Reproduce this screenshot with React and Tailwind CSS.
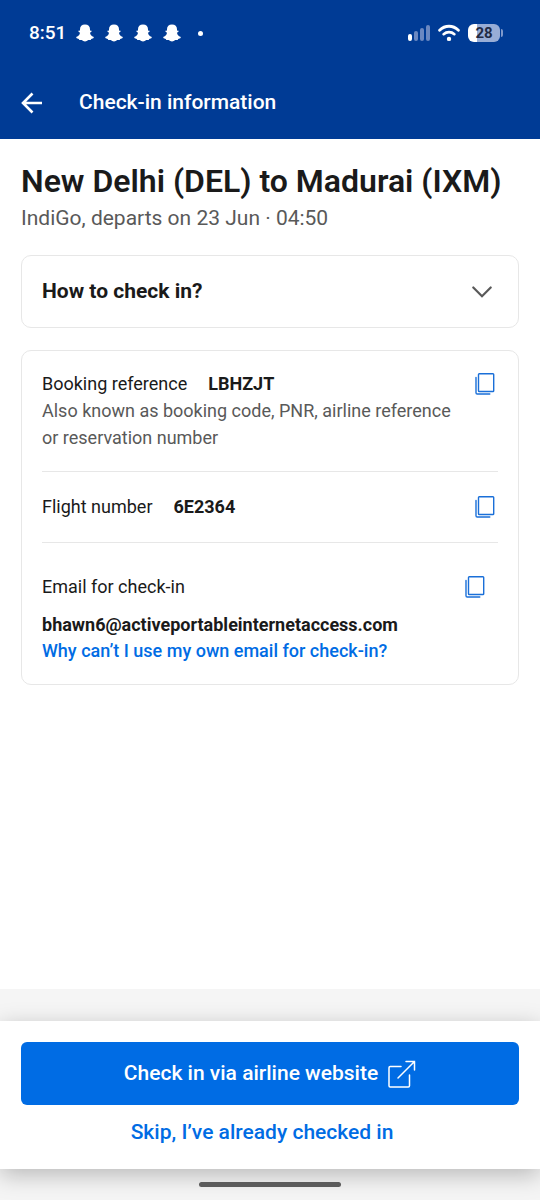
import React from "react";

const BOOKING = {
  title: "New Delhi (DEL) to Madurai (IXM)",
  subtitle: "IndiGo, departs on 23 Jun · 04:50",
  reference: "LBHZJT",
  flight: "6E2364",
  email: "bhawn6@activeportableinternetaccess.com",
};

function GhostIcon() {
  return (
    <svg className="w-[18px] h-[18px]" viewBox="0 0 18 18" fill="white">
      <path d="M9 .5C12.200 .5 14 2.500 14 5.200V6.800L15 6.600Q15.900 6.900 15.400 7.800L14 8.700C14.300 10.900 15.600 12.100 17.400 12.800Q18.200 13.500 17.300 14.200L15.200 15L14.700 16.100L12.300 16C11.200 16.700 10.300 17.500 9 17.500S6.800 16.700 5.700 16L3.300 16.100L2.800 15L.7 14.200Q-.2 13.500 .6 12.800C2.400 12.100 3.700 10.900 4 8.700L2.600 7.800Q2.100 6.900 3 6.600L4 6.800V5.200C4 2.500 5.800 .5 9 .5Z" />
    </svg>
  );
}

function WifiIcon() {
  return (
    <svg className="w-[22px] h-[18px]" viewBox="0 0 22 18" fill="none">
      <path
        d="M1.6 6.2C7 .9 15 .9 20.4 6.2"
        stroke="white"
        strokeWidth="2.8"
        strokeLinecap="round"
      />
      <path
        d="M5.6 10.2C8.7 7.4 13.3 7.4 16.4 10.2"
        stroke="white"
        strokeWidth="2.6"
        strokeLinecap="round"
      />
      <circle cx="11" cy="14.9" r="2.2" fill="white" />
    </svg>
  );
}

function BatteryIcon() {
  return (
    <div className="flex items-center gap-px">
      <div className="flex items-center justify-center w-8 h-[18px] rounded-md bg-linear-to-r from-white from-28% to-[#98add6] to-28% text-[#1f2a44] text-[15px] leading-none font-bold">
        28
      </div>
      <div className="w-[2px] h-2 rounded-r-full bg-[#7f99cb]" />
    </div>
  );
}

function StatusBar() {
  return (
    <div className="flex items-center justify-between h-[66px] pl-[29px] pr-[37px]">
      <div className="flex items-center">
        <span className="w-[47px] text-[19px] font-medium">8:51</span>
        <div className="flex items-center gap-[11px]">
          {[0, 1, 2, 3].map((item) => (
            <GhostIcon key={item} />
          ))}
        </div>
        <span className="w-[5px] h-[5px] ml-[17px] rounded-full bg-white" />
      </div>
      <div className="flex items-center gap-2">
        <div className="flex items-end gap-[2px]">
          <span className="w-1 h-[7px] rounded-full bg-white" />
          <span className="w-1 h-[10px] rounded-full bg-[#6b88c1]" />
          <span className="w-1 h-[13px] rounded-full bg-[#6b88c1]" />
          <span className="w-1 h-4 rounded-full bg-[#6b88c1]" />
        </div>
        <WifiIcon />
        <BatteryIcon />
      </div>
    </div>
  );
}

function CopyButton({ label, className = "" }) {
  return (
    <button
      type="button"
      aria-label={label}
      className={`shrink-0 h-[26px] text-[#1a6fd8] ${className}`}
    >
      <svg className="w-5 h-[22px]" viewBox="0 0 20 22" fill="none">
        <rect
          x="3.5"
          y="0.7"
          width="15.2"
          height="17.8"
          rx="0.8"
          stroke="currentColor"
          strokeWidth="1.4"
        />
        <path
          d="M1 4.5V19.8Q1 21 2.2 21H14.8"
          stroke="currentColor"
          strokeWidth="1.4"
          strokeLinecap="round"
        />
      </svg>
    </button>
  );
}

export default function App() {
  const [open, setOpen] = React.useState(false);

  return (
    <div className="min-h-screen flex flex-col bg-white font-[Roboto,sans-serif] text-[#1a1a1a]">
      <header className="bg-[#003b95] text-white">
        <StatusBar />
        <div className="flex items-center h-[73px] px-[21px]">
          <button type="button" aria-label="Back" className="w-[58px]">
            <svg className="w-[22px] h-[22px]" viewBox="0 0 22 22" fill="none">
              <path
                d="M21 11H2M11.5 1.5L2 11L11.5 20.5"
                stroke="currentColor"
                strokeWidth="2.6"
              />
            </svg>
          </button>
          <h1 className="text-[21px] font-medium">Check-in information</h1>
        </div>
      </header>

      <main className="flex-1 px-[21px] pt-[23px]">
        <h2 className="text-[32px] leading-[38px] font-semibold">
          {BOOKING.title}
        </h2>
        <p className="mt-1 text-[21px] leading-7 text-[#595959]">
          {BOOKING.subtitle}
        </p>

        <button
          type="button"
          aria-expanded={open}
          onClick={() => setOpen(!open)}
          className="flex items-center justify-between w-full h-[73px] mt-[23px] pl-5 pr-[26px] border border-[#e7e7e7] rounded-[10px] text-[21px] font-bold"
        >
          <span>How to check in?</span>
          <svg className="w-5 h-3" viewBox="0 0 20 12" fill="none">
            <path
              d="M1.3 1.5L10 10.2L18.7 1.5"
              stroke="#595959"
              strokeWidth="2.2"
              strokeLinecap="round"
            />
          </svg>
        </button>

        <section className="mt-[22px] p-5 border border-[#e7e7e7] rounded-[10px] text-[18px] leading-[26px]">
          <div className="flex items-start justify-between gap-5 pb-5 border-b border-[#e7e7e7]">
            <div>
              <div className="flex gap-[21px]">
                <span>Booking reference</span>
                <span className="font-bold">{BOOKING.reference}</span>
              </div>
              <p className="leading-[27px] text-[#595959]">
                Also known as booking code, PNR, airline reference or
                reservation number
              </p>
            </div>
            <CopyButton label="Copy booking reference" className="mr-[3px]" />
          </div>
          <div className="flex items-start justify-between py-[22px] border-b border-[#e7e7e7]">
            <div className="flex gap-[21px]">
              <span>Flight number</span>
              <span className="font-bold">{BOOKING.flight}</span>
            </div>
            <CopyButton label="Copy flight number" className="mr-[3px]" />
          </div>
          <div className="pt-[31px]">
            <div className="flex items-start justify-between">
              <span>Email for check-in</span>
              <CopyButton label="Copy email" className="mr-[13px]" />
            </div>
            <p className="mt-3 font-bold">{BOOKING.email}</p>
            <a href="#email" className="block font-medium text-[#006ce4]">
              Why can’t I use my own email for check-in?
            </a>
          </div>
        </section>
      </main>

      <div className="pt-8 bg-[#f5f5f5]">
        <footer className="flex flex-col items-stretch px-[21px] pt-[21px] pb-[21px] bg-white shadow-[0_6px_22px_rgba(0,0,0,0.25)]">
          <button
            type="button"
            className="flex items-center justify-center gap-[10px] h-[63px] rounded-md bg-[#006ce4] text-white text-[21px] font-medium"
          >
            <span>Check in via airline website</span>
            <svg className="w-7 h-7" viewBox="0 0 28 28" fill="none">
              <path
                d="M13 6.5H2.2Q1 6.5 1 7.7V25.8Q1 27 2.2 27H20.3Q21.5 27 21.5 25.8V15M10 18L26.5 1.5M18 1.5H26.5V10"
                stroke="currentColor"
                strokeWidth="1.5"
                strokeLinecap="round"
              />
            </svg>
          </button>
          <button
            type="button"
            className="mt-3 h-[31px] pr-4 text-[21px] font-medium text-[#006ce4]"
          >
            Skip, I’ve already checked in
          </button>
        </footer>
        <div className="flex justify-center h-[31px] pt-[13px]">
          <div className="w-[142px] h-[5px] rounded-full bg-[#5c5c5c]" />
        </div>
      </div>
    </div>
  );
}
